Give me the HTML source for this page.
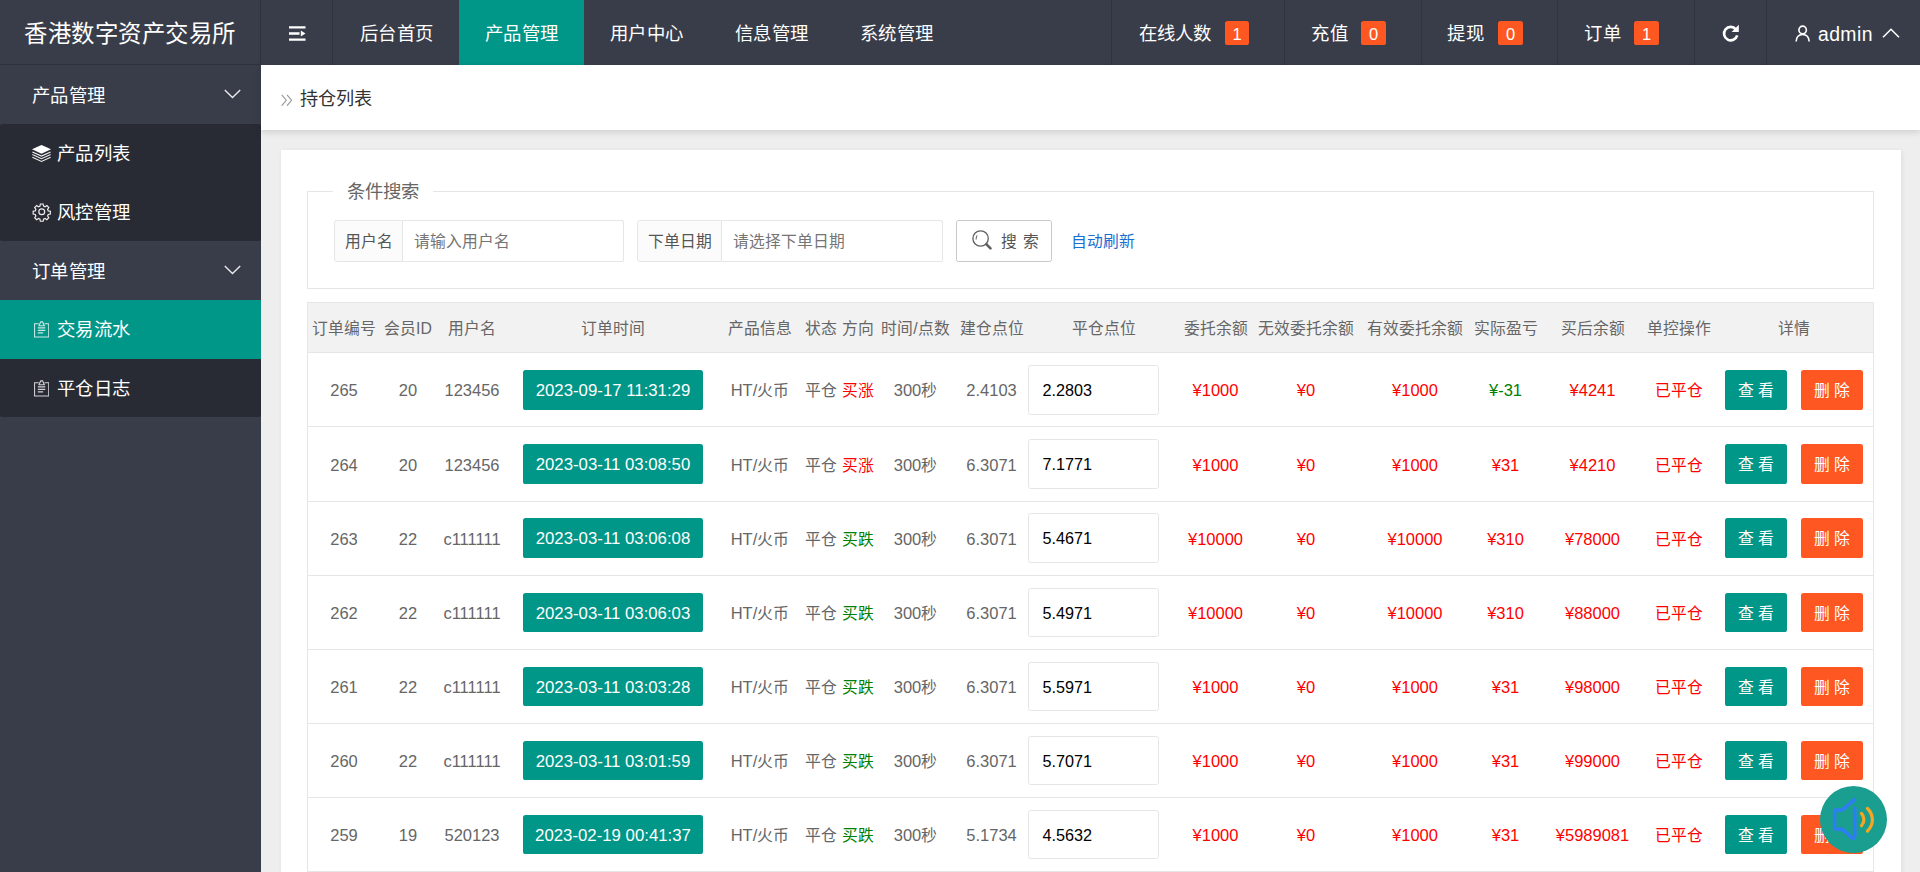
<!DOCTYPE html>
<html lang="zh-CN">
<head>
<meta charset="utf-8">
<title>持仓列表</title>
<style>
*{box-sizing:border-box;margin:0;padding:0}
html,body{width:1920px;height:872px;overflow:hidden;background:#eee}
body{position:relative;font-family:"Liberation Sans",sans-serif;font-size:18.2px;color:#666;-webkit-font-smoothing:antialiased}
i{font-style:normal}
.abs{position:absolute}
/* header */
#hd{position:absolute;left:0;top:0;width:1920px;height:65px;background:#393d49}
#logo{letter-spacing:.5px;position:absolute;left:0;top:0;width:261px;height:65px;border-right:1px solid #2f323c;border-bottom:1px solid #2f323c;color:#fff;font-size:23.4px;line-height:68px;text-align:center;white-space:nowrap;overflow:hidden}
.nv{letter-spacing:.25px;position:absolute;top:0;height:65px;line-height:68px;color:#fff;font-size:18.4px;text-align:center;white-space:nowrap;overflow:hidden}
.nv.on{background:#009688}
.vl{position:absolute;top:0;width:1px;height:65px;background:#31343f}
.bdg{position:absolute;top:21px;width:25px;height:24px;border-radius:2.600px;background:#ff5722;color:#fff;font-size:16.5px;line-height:27px;text-align:center}
/* side */
#sd{position:absolute;left:0;top:65px;width:261px;height:807px;background:#393d49}
.si{letter-spacing:.25px;position:absolute;left:0;width:261px;height:59px;line-height:62px;color:#fff;font-size:18.4px;white-space:nowrap;overflow:hidden}
.si.p{padding-left:32px}
.si.ch{padding-left:57px;line-height:60px}
.si.on{background:#009688}
.dk{position:absolute;left:0;width:261px;background:#282b33;border-radius:2.600px}
.si svg,.nv svg{position:absolute}
/* main */
#bc{position:absolute;left:261px;top:65px;width:1659px;height:65px;background:#fff;box-shadow:0 2px 7px rgba(0,0,0,.14);line-height:69px;font-size:18.2px;color:#333}
#card{position:absolute;left:281px;top:150px;width:1620px;height:730px;background:#fff;box-shadow:1px 1px 5px rgba(0,0,0,.075)}
#fs{position:absolute;left:307px;top:191px;width:1567px;height:98px;border:1px solid #e6e6e6}
#lg{position:absolute;left:333px;top:178px;width:100px;height:28px;background:#fff;color:#666;font-size:18.4px;line-height:28px;text-align:center;white-space:nowrap;overflow:hidden}
.lb{position:absolute;top:220px;height:42px;background:#fbfbfb;border:1px solid #e6e6e6;border-radius:2.600px 0 0 2.600px;color:#555;font-size:15.8px;line-height:41px;text-align:center;white-space:nowrap;overflow:hidden}
.ip{position:absolute;top:220px;height:42px;background:#fff;border:1px solid #e6e6e6;border-left:none;border-radius:0 2.600px 2.600px 0;color:#757575;font-size:15.8px;line-height:41px;padding-left:11px;white-space:nowrap;overflow:hidden}
#sb{position:absolute;left:956px;top:220px;width:96px;height:42px;border:1px solid #c9c9c9;border-radius:2.600px;background:#fff;color:#555;font-size:15.8px;line-height:42px;padding-left:44px;word-spacing:1.5px;white-space:nowrap;overflow:hidden}
#ar{position:absolute;left:1071px;top:220px;height:42px;line-height:44px;color:#176fd2;font-size:15.8px;white-space:nowrap}
/* table */
#tb{position:absolute;left:307px;top:302px;width:1567px;height:580px;border:1px solid #e6e6e6;background:#fff}
.thead{position:absolute;left:0;top:303px;width:1920px;height:49px}
.thead:before{content:"";position:absolute;left:308px;top:0;width:1565px;height:49px;background:#f2f2f2}
.tr{position:absolute;left:0;width:1920px}
.tr:before{content:"";position:absolute;left:308px;top:-1px;width:1565px;height:1px;background:#e6e6e6}
.c{position:absolute;top:0;width:200px;height:100%;text-align:center;white-space:nowrap;color:#666}
.thead .c{line-height:52px;font-size:15.8px}
.tr .c{line-height:inherit}
.c.z,.z{font-size:15.8px}
.c.n,.n{font-size:16.5px}
.zz{margin-top:1px}
.c.red{color:#ff0000}
.c.grn{color:#008000}
.btn{position:absolute;top:17px;height:40px;border-radius:2.600px;color:#fff;text-align:center;line-height:40px;white-space:nowrap;overflow:hidden}
.tm{width:180px;background:#009688;font-size:16.8px}
.vw{width:62px;background:#009688;font-size:15.8px}
.del{width:62px;background:#ff5722;font-size:15.8px}
.inp{position:absolute;left:1028px;top:12px;width:131px;height:50px;border:1px solid #e6e6e6;border-radius:2.600px;background:#fff;color:#000;font-size:16.200px;line-height:49px;padding-left:13.500px;white-space:nowrap;overflow:hidden}
#fab{position:absolute;left:1820px;top:786px;width:67px;height:67px;border-radius:50%;background:#1a9e90}
</style>
</head>
<body>
<div id="hd">
  <div id="logo">香港数字资产交易所</div>
  <div class="vl" style="left:332px"></div>
  <div class="nv" style="left:261px;width:72px">
    <svg style="left:27px;top:25px" width="19" height="17" viewBox="0 0 19 17"><g fill="none" stroke="#fff" stroke-width="2.300"><path d="M1 2.300h16.500M1 8.500h10.500M1 14.700h16.500"/></g><path d="M12.800 5.500l4.700 3-4.700 3z" fill="#fff"/></svg>
  </div>
  <div class="nv" style="left:334px;width:125px">后台首页</div>
  <div class="nv on" style="left:459px;width:125px">产品管理</div>
  <div class="nv" style="left:584px;width:125px">用户中心</div>
  <div class="nv" style="left:709px;width:125px">信息管理</div>
  <div class="nv" style="left:834px;width:125px">系统管理</div>

  <div class="vl" style="left:1111px"></div>
  <div class="nv" style="left:1137px;width:76px">在线人数</div>
  <div class="bdg" style="left:1225px;width:24px">1</div>
  <div class="vl" style="left:1284px"></div>
  <div class="nv" style="left:1310px;width:39px">充值</div>
  <div class="bdg" style="left:1361px">0</div>
  <div class="vl" style="left:1421px"></div>
  <div class="nv" style="left:1446px;width:39px">提现</div>
  <div class="bdg" style="left:1498px">0</div>
  <div class="vl" style="left:1557px"></div>
  <div class="nv" style="left:1583px;width:39px">订单</div>
  <div class="bdg" style="left:1634px">1</div>
  <div class="vl" style="left:1694px"></div>
  <div class="nv" style="left:1695px;width:71px">
    <svg style="left:26px;top:24px" width="19" height="19" viewBox="0 0 19 19"><path d="M14.900 5.300A6.700 6.700 0 1 0 16.200 11.400" fill="none" stroke="#fff" stroke-width="2.600"/><path d="M17.800 .8v7.200H10.600z" fill="#fff"/></svg>
  </div>
  <div class="vl" style="left:1766px"></div>
  <div class="nv" style="left:1767px;width:153px">
    <svg style="left:28px;top:25px" width="15.300" height="17" viewBox="0 0 16 17" preserveAspectRatio="none"><g fill="none" stroke="#fff" stroke-width="1.7"><circle cx="8" cy="5" r="3.9"/><path d="M1.2 16.5c.3-4.6 2.6-7 6.8-7s6.5 2.4 6.8 7"/></g></svg>
    <span style="position:absolute;left:51px;top:0;font-size:19.4px;letter-spacing:.4px">admin</span>
    <svg style="left:115px;top:28px" width="18" height="10" viewBox="0 0 18 10"><path d="M1 9.2L9 1.3l8 7.9" fill="none" stroke="#fff" stroke-width="1.6"/></svg>
  </div>
</div>

<div id="sd">
  <div class="si p" style="top:0">产品管理
    <svg style="left:224px;top:24px" width="17" height="10" viewBox="0 0 17 10"><path d="M.8 .9l7.700 7.700L16.200 .9" fill="none" stroke="#fff" stroke-opacity=".9" stroke-width="1.350"/></svg>
  </div>
  <div class="dk" style="top:59px;height:117px"></div>
  <div class="si ch" style="top:59px">产品列表
    <svg style="left:32px;top:20.5px" width="19" height="18" viewBox="0 0 19 18"><path d="M9.5 0L19 4.3 9.5 8.700 0 4.300z" fill="#fff"/><path d="M.4 6.900l9.100 4.100L18.600 6.900M.4 9.600l9.100 4.100 9.100-4.100M.4 12.300l9.100 4.100 9.100-4.100" fill="none" stroke="#fff" stroke-opacity=".92" stroke-width="1.15"/></svg>
  </div>
  <div class="si ch" style="top:118px">风控管理
    <svg style="left:32px;top:19px" width="19.500" height="19.500" viewBox="0 0 24 24"><g fill="none" stroke="#fff" stroke-opacity=".92" stroke-width="1.45"><circle cx="12" cy="12" r="3.6"/><path d="M10.3 2.5h3.4l.5 2.6 1.9.8 2.2-1.5 2.4 2.4-1.5 2.2.8 1.9 2.6.5v3.4l-2.6.5-.8 1.9 1.5 2.2-2.4 2.4-2.2-1.5-1.9.8-.5 2.6h-3.4l-.5-2.6-1.9-.8-2.2 1.5-2.4-2.4 1.5-2.2-.8-1.9-2.6-.5v-3.4l2.6-.5.8-1.9-1.5-2.2 2.4-2.4 2.2 1.5 1.9-.8z"/></g></svg>
  </div>
  <div class="si p" style="top:176px">订单管理
    <svg style="left:224px;top:24px" width="17" height="10" viewBox="0 0 17 10"><path d="M.8 .9l7.700 7.700L16.200 .9" fill="none" stroke="#fff" stroke-opacity=".9" stroke-width="1.350"/></svg>
  </div>
  <div class="dk" style="top:235px;height:117px"></div>
  <div class="si ch on" style="top:235px">交易流水
    <svg style="left:33.500px;top:21px" width="15.300" height="17" viewBox="0 0 16 17" preserveAspectRatio="none"><g fill="none" stroke="#fff" stroke-opacity=".8" stroke-width="1.1"><path d="M5 2.800H.6v13.200h14.800V2.800H11"/><path d="M5.200 4.700L7 .9h2l1.800 3.800z"/><path d="M4 6.900h7.800M4 9.400h7.800M4 11.900h5.600"/></g></svg>
  </div>
  <div class="si ch" style="top:294px">平仓日志
    <svg style="left:33.500px;top:21px" width="15.300" height="17" viewBox="0 0 16 17" preserveAspectRatio="none"><g fill="none" stroke="#fff" stroke-opacity=".8" stroke-width="1.1"><path d="M5 2.800H.6v13.200h14.800V2.800H11"/><path d="M5.200 4.700L7 .9h2l1.800 3.800z"/><path d="M4 6.900h7.800M4 9.400h7.800M4 11.900h5.600"/></g></svg>
  </div>
</div>

<div id="bc"><svg class="abs" style="left:20px;top:28.500px" width="11.500" height="12.500" viewBox="0 0 12 13"><path d="M.8 .8l4.700 5.700L.8 12.200M6.300 .8l4.700 5.700-4.700 5.700" fill="none" stroke="#999" stroke-width="1.2"/></svg><span class="abs" style="left:37px;top:0;width:76px;text-align:center;white-space:nowrap;overflow:hidden">持仓列表</span></div>
<div id="card"></div>
<div id="fs"></div>
<div id="lg">条件搜索</div>
<div class="lb" style="left:334px;width:69px">用户名</div>
<div class="ip" style="left:403px;width:221px">请输入用户名</div>
<div class="lb" style="left:637px;width:85px">下单日期</div>
<div class="ip" style="left:722px;width:221px">请选择下单日期</div>
<div id="sb"><svg class="abs" style="left:14px;top:8px" width="24" height="24" viewBox="0 0 24 24"><g fill="none" stroke="#5f5f5f"><circle cx="9.6" cy="9.500" r="7.700" stroke-width="1.300"/><path d="M15.300 15.200l4.200 4.200" stroke-width="2.600" stroke-linecap="round"/><path d="M5.200 10.500a4.500 4.500 0 0 1 1-4" stroke-width="1.100"/></g></svg>搜 索</div>
<div id="ar">自动刷新</div>
<div id="tb"></div>

<div class="thead">
<span class="c h" style="left:244.0px">订单编号</span>
<span class="c h" style="left:308.0px">会员ID</span>
<span class="c h" style="left:372.0px">用户名</span>
<span class="c h" style="left:513.0px">订单时间</span>
<span class="c h" style="left:660.0px">产品信息</span>
<span class="c h" style="left:721.0px">状态</span>
<span class="c h" style="left:757.5px">方向</span>
<span class="c h" style="left:815.5px">时间/点数</span>
<span class="c h" style="left:891.5px">建仓点位</span>
<span class="c h" style="left:1003.5px">平仓点位</span>
<span class="c h" style="left:1115.5px">委托余额</span>
<span class="c h" style="left:1206.0px">无效委托余额</span>
<span class="c h" style="left:1315.0px">有效委托余额</span>
<span class="c h" style="left:1405.5px">实际盈亏</span>
<span class="c h" style="left:1492.5px">买后余额</span>
<span class="c h" style="left:1578.5px">单控操作</span>
<span class="c h" style="left:1694.0px">详情</span>
</div>
<div class="tr" style="top:353px;height:73px;line-height:74px">
<span class="c n" style="left:244.0px">265</span>
<span class="c n" style="left:308.0px">20</span>
<span class="c n" style="left:372.0px">123456</span>
<span class="btn tm" style="left:523px;top:17px;height:40px;line-height:42px">2023-09-17 11:31:29</span>
<span class="c z" style="left:660.0px"><i class="n">HT/</i>火币</span>
<span class="c z zz" style="left:721.0px">平仓</span>
<span class="c z zz red" style="left:757.5px">买涨</span>
<span class="c z" style="left:815.5px"><i class="n">300</i>秒</span>
<span class="c n" style="left:891.5px">2.4103</span>
<span class="inp" style="top:12px;height:50px;line-height:49px">2.2803</span>
<span class="c n red" style="left:1115.5px">¥1000</span>
<span class="c n red" style="left:1206.0px">¥0</span>
<span class="c n red" style="left:1315.0px">¥1000</span>
<span class="c n grn" style="left:1405.5px">¥-31</span>
<span class="c n red" style="left:1492.5px">¥4241</span>
<span class="c z zz red" style="left:1578.5px">已平仓</span>
<span class="btn vw" style="left:1725px;top:17px;height:40px;line-height:42px">查 看</span>
<span class="btn del" style="left:1801px;top:17px;height:40px;line-height:42px">删 除</span>
</div>
<div class="tr" style="top:427px;height:74px;line-height:76px">
<span class="c n" style="left:244.0px">264</span>
<span class="c n" style="left:308.0px">20</span>
<span class="c n" style="left:372.0px">123456</span>
<span class="btn tm" style="left:523px;top:17px;height:40px;line-height:42px">2023-03-11 03:08:50</span>
<span class="c z" style="left:660.0px"><i class="n">HT/</i>火币</span>
<span class="c z zz" style="left:721.0px">平仓</span>
<span class="c z zz red" style="left:757.5px">买涨</span>
<span class="c z" style="left:815.5px"><i class="n">300</i>秒</span>
<span class="c n" style="left:891.5px">6.3071</span>
<span class="inp" style="top:12px;height:50px;line-height:49px">7.1771</span>
<span class="c n red" style="left:1115.5px">¥1000</span>
<span class="c n red" style="left:1206.0px">¥0</span>
<span class="c n red" style="left:1315.0px">¥1000</span>
<span class="c n red" style="left:1405.5px">¥31</span>
<span class="c n red" style="left:1492.5px">¥4210</span>
<span class="c z zz red" style="left:1578.5px">已平仓</span>
<span class="btn vw" style="left:1725px;top:17px;height:40px;line-height:42px">查 看</span>
<span class="btn del" style="left:1801px;top:17px;height:40px;line-height:42px">删 除</span>
</div>
<div class="tr" style="top:502px;height:73px;line-height:74px">
<span class="c n" style="left:244.0px">263</span>
<span class="c n" style="left:308.0px">22</span>
<span class="c n" style="left:372.0px">c111111</span>
<span class="btn tm" style="left:523px;top:16px;height:40px;line-height:42px">2023-03-11 03:06:08</span>
<span class="c z" style="left:660.0px"><i class="n">HT/</i>火币</span>
<span class="c z zz" style="left:721.0px">平仓</span>
<span class="c z zz grn" style="left:757.5px">买跌</span>
<span class="c z" style="left:815.5px"><i class="n">300</i>秒</span>
<span class="c n" style="left:891.5px">6.3071</span>
<span class="inp" style="top:11px;height:50px;line-height:49px">5.4671</span>
<span class="c n red" style="left:1115.5px">¥10000</span>
<span class="c n red" style="left:1206.0px">¥0</span>
<span class="c n red" style="left:1315.0px">¥10000</span>
<span class="c n red" style="left:1405.5px">¥310</span>
<span class="c n red" style="left:1492.5px">¥78000</span>
<span class="c z zz red" style="left:1578.5px">已平仓</span>
<span class="btn vw" style="left:1725px;top:16px;height:40px;line-height:42px">查 看</span>
<span class="btn del" style="left:1801px;top:16px;height:40px;line-height:42px">删 除</span>
</div>
<div class="tr" style="top:576px;height:73px;line-height:74px">
<span class="c n" style="left:244.0px">262</span>
<span class="c n" style="left:308.0px">22</span>
<span class="c n" style="left:372.0px">c111111</span>
<span class="btn tm" style="left:523px;top:17px;height:39px;line-height:41px">2023-03-11 03:06:03</span>
<span class="c z" style="left:660.0px"><i class="n">HT/</i>火币</span>
<span class="c z zz" style="left:721.0px">平仓</span>
<span class="c z zz grn" style="left:757.5px">买跌</span>
<span class="c z" style="left:815.5px"><i class="n">300</i>秒</span>
<span class="c n" style="left:891.5px">6.3071</span>
<span class="inp" style="top:12px;height:49px;line-height:48px">5.4971</span>
<span class="c n red" style="left:1115.5px">¥10000</span>
<span class="c n red" style="left:1206.0px">¥0</span>
<span class="c n red" style="left:1315.0px">¥10000</span>
<span class="c n red" style="left:1405.5px">¥310</span>
<span class="c n red" style="left:1492.5px">¥88000</span>
<span class="c z zz red" style="left:1578.5px">已平仓</span>
<span class="btn vw" style="left:1725px;top:17px;height:39px;line-height:41px">查 看</span>
<span class="btn del" style="left:1801px;top:17px;height:39px;line-height:41px">删 除</span>
</div>
<div class="tr" style="top:650px;height:73px;line-height:74px">
<span class="c n" style="left:244.0px">261</span>
<span class="c n" style="left:308.0px">22</span>
<span class="c n" style="left:372.0px">c111111</span>
<span class="btn tm" style="left:523px;top:17px;height:39px;line-height:41px">2023-03-11 03:03:28</span>
<span class="c z" style="left:660.0px"><i class="n">HT/</i>火币</span>
<span class="c z zz" style="left:721.0px">平仓</span>
<span class="c z zz grn" style="left:757.5px">买跌</span>
<span class="c z" style="left:815.5px"><i class="n">300</i>秒</span>
<span class="c n" style="left:891.5px">6.3071</span>
<span class="inp" style="top:12px;height:49px;line-height:48px">5.5971</span>
<span class="c n red" style="left:1115.5px">¥1000</span>
<span class="c n red" style="left:1206.0px">¥0</span>
<span class="c n red" style="left:1315.0px">¥1000</span>
<span class="c n red" style="left:1405.5px">¥31</span>
<span class="c n red" style="left:1492.5px">¥98000</span>
<span class="c z zz red" style="left:1578.5px">已平仓</span>
<span class="btn vw" style="left:1725px;top:17px;height:39px;line-height:41px">查 看</span>
<span class="btn del" style="left:1801px;top:17px;height:39px;line-height:41px">删 除</span>
</div>
<div class="tr" style="top:724px;height:73px;line-height:74px">
<span class="c n" style="left:244.0px">260</span>
<span class="c n" style="left:308.0px">22</span>
<span class="c n" style="left:372.0px">c111111</span>
<span class="btn tm" style="left:523px;top:17px;height:39px;line-height:41px">2023-03-11 03:01:59</span>
<span class="c z" style="left:660.0px"><i class="n">HT/</i>火币</span>
<span class="c z zz" style="left:721.0px">平仓</span>
<span class="c z zz grn" style="left:757.5px">买跌</span>
<span class="c z" style="left:815.5px"><i class="n">300</i>秒</span>
<span class="c n" style="left:891.5px">6.3071</span>
<span class="inp" style="top:12px;height:49px;line-height:48px">5.7071</span>
<span class="c n red" style="left:1115.5px">¥1000</span>
<span class="c n red" style="left:1206.0px">¥0</span>
<span class="c n red" style="left:1315.0px">¥1000</span>
<span class="c n red" style="left:1405.5px">¥31</span>
<span class="c n red" style="left:1492.5px">¥99000</span>
<span class="c z zz red" style="left:1578.5px">已平仓</span>
<span class="btn vw" style="left:1725px;top:17px;height:39px;line-height:41px">查 看</span>
<span class="btn del" style="left:1801px;top:17px;height:39px;line-height:41px">删 除</span>
</div>
<div class="tr" style="top:798px;height:73px;line-height:74px">
<span class="c n" style="left:244.0px">259</span>
<span class="c n" style="left:308.0px">19</span>
<span class="c n" style="left:372.0px">520123</span>
<span class="btn tm" style="left:523px;top:17px;height:39px;line-height:41px">2023-02-19 00:41:37</span>
<span class="c z" style="left:660.0px"><i class="n">HT/</i>火币</span>
<span class="c z zz" style="left:721.0px">平仓</span>
<span class="c z zz grn" style="left:757.5px">买跌</span>
<span class="c z" style="left:815.5px"><i class="n">300</i>秒</span>
<span class="c n" style="left:891.5px">5.1734</span>
<span class="inp" style="top:12px;height:49px;line-height:48px">4.5632</span>
<span class="c n red" style="left:1115.5px">¥1000</span>
<span class="c n red" style="left:1206.0px">¥0</span>
<span class="c n red" style="left:1315.0px">¥1000</span>
<span class="c n red" style="left:1405.5px">¥31</span>
<span class="c n red" style="left:1492.5px">¥5989081</span>
<span class="c z zz red" style="left:1578.5px">已平仓</span>
<span class="btn vw" style="left:1725px;top:17px;height:39px;line-height:41px">查 看</span>
<span class="btn del" style="left:1801px;top:17px;height:39px;line-height:41px">删 除</span>
</div>
<div class="abs" style="left:308px;top:871px;width:1565px;height:1px;background:#e6e6e6"></div>
<div id="fab"><svg width="67" height="67" viewBox="0 0 67 67"><path d="M34.600 13.600L22.300 24H16.900a2.300 2.300 0 0 0-2.300 2.300v14.600a2.300 2.300 0 0 0 2.300 2.300h5.400l9.400 8.400c1.700 1.300 3.200.5 3.200-1.300V22.300" fill="none" stroke="#2f7df6" stroke-width="3.400" stroke-linejoin="round" stroke-linecap="round"/><path d="M41.5 27.5c3.2 3.2 3.2 9 0 12.200" fill="none" stroke="#f5a623" stroke-width="3.2" stroke-linecap="round"/><path d="M47.5 22.500c6.500 6.500 6.500 16 0 22.500" fill="none" stroke="#f5a623" stroke-width="3.2" stroke-linecap="round"/></svg></div>
</body>
</html>
